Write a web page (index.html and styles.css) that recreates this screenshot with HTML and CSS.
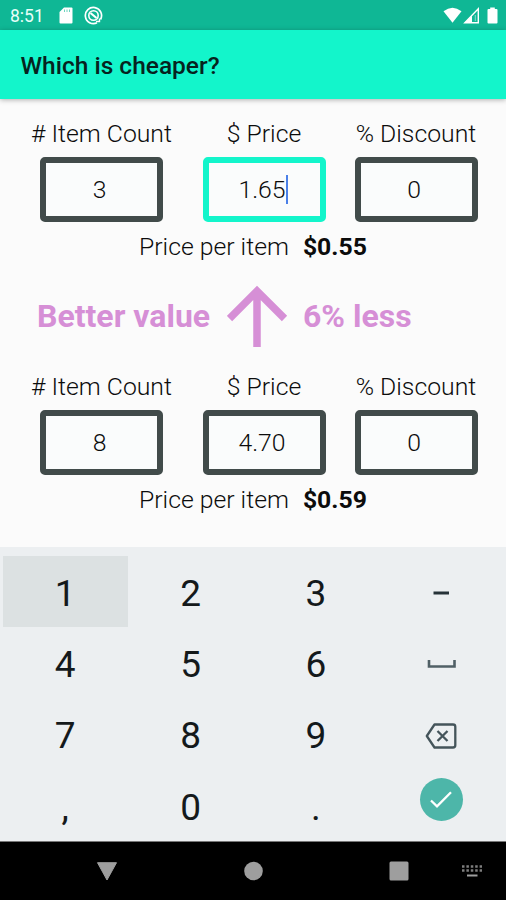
FILE: index.html
```html
<!DOCTYPE html>
<html lang="en">
<head>
  <meta charset="UTF-8">
  <meta name="viewport" content="width=device-width, initial-scale=1.0">
  <title>Which is cheaper?</title>
  <link rel="stylesheet" href="styles.css">
</head>
<body>
  <div class="status-bar">
    <span class="clock">8:51</span>
    <svg class="sd-card" width="14" height="17" viewBox="0 0 14 17">
      <path d="M5 0.5h7.500q1 0 1 1v14q0 1-1 1h-11q-1 0-1-1V5z" fill="#fff"/>
      <path d="M5.500 2.500v2.500M8 2.500v2.500M10.500 2.500v2.500" stroke="#0fb795" stroke-width="1" opacity="0.600"/>
    </svg>
    <svg class="sync" width="19" height="19" viewBox="0 0 19 19" fill="none" stroke="#fff">
      <path d="M13 16.800A8.100 8.100 0 1 1 16.500 13.500" stroke-width="1.700"/>
      <circle cx="9.500" cy="9.500" r="4.700" stroke-width="1.600"/>
      <path d="M6.500 7L12.500 12" stroke-width="2.200"/>
      <path d="M12 15.500h3.500v-3" stroke-width="1.400"/>
    </svg>
    <div class="status-right">
      <svg width="20" height="17" viewBox="0 0 20 17">
        <path d="M0.500 4.300Q9.500-2.700 18.500 4.300L9.500 15.700z" fill="#fff"/>
      </svg>
      <svg width="17" height="17" viewBox="0 0 17 17">
        <path d="M15.300 1.800V15.700H1.800z" fill="none" stroke="#fff" stroke-width="1.400"/>
        <path d="M9 8.500V15.700H1.500z" fill="#fff"/>
        <path d="M12.300 8v6" stroke="#fff" stroke-width="1" opacity="0.500"/>
      </svg>
      <svg class="battery" width="11" height="17" viewBox="0 0 11 17">
        <path d="M3.200 0.500h4.600v1.500h1.700q1 0 1 1v12.500q0 1-1 1h-8q-1 0-1-1V3q0-1 1-1h1.700z" fill="#fff"/>
      </svg>
    </div>
  </div>
  <header class="app-bar">
    <h1>Which is cheaper?</h1>
  </header>

  <main class="content">
    <section class="product">
      <div class="fields">
        <div class="field">
          <label># Item Count</label>
          <div class="box">3</div>
        </div>
        <div class="field">
          <label>$ Price</label>
          <div class="box active">1.65<span class="caret"></span></div>
        </div>
        <div class="field">
          <label>% Discount</label>
          <div class="box">0</div>
        </div>
      </div>
      <p class="per-item">Price per item <strong>$0.55</strong></p>
    </section>

    <div class="result">
      <span class="better">Better value</span>
      <svg width="62" height="62" viewBox="0 0 62 62" fill="none" stroke="#d68fd6" stroke-width="7.500">
        <path d="M30 62V6M2.500 33.500L30 6L57.500 33.500"/>
      </svg>
      <span class="less">6% less</span>
    </div>

    <section class="product">
      <div class="fields">
        <div class="field">
          <label># Item Count</label>
          <div class="box">8</div>
        </div>
        <div class="field">
          <label>$ Price</label>
          <div class="box">4.70</div>
        </div>
        <div class="field">
          <label>% Discount</label>
          <div class="box">0</div>
        </div>
      </div>
      <p class="per-item">Price per item <strong>$0.59</strong></p>
    </section>
  </main>

  <div class="keyboard">
    <div class="key pressed">1</div>
    <div class="key">2</div>
    <div class="key">3</div>
    <div class="key">
      <svg width="16" height="4" viewBox="0 0 16 4"><path d="M0.500 2h15.500" stroke="#263238" stroke-width="3"/></svg>
    </div>
    <div class="key">4</div>
    <div class="key">5</div>
    <div class="key">6</div>
    <div class="key">
      <svg width="29" height="8" viewBox="0 0 29 8"><path d="M2 0v6.500h25.500V0" fill="none" stroke="#506066" stroke-width="2.600"/></svg>
    </div>
    <div class="key">7</div>
    <div class="key">8</div>
    <div class="key">9</div>
    <div class="key">
      <svg width="32" height="26" viewBox="0 0 32 26" fill="none" stroke="#44545a" stroke-width="2.300">
        <path d="M9.500 1.500H28Q30.300 1.500 30.300 3.800V22.200Q30.300 24.500 28 24.500H9.500L1.800 13z" stroke-linejoin="round"/>
        <path d="M12.500 8L22.500 18M22.500 8L12.500 18"/>
      </svg>
    </div>
    <div class="key">,</div>
    <div class="key">0</div>
    <div class="key">.</div>
    <div class="key">
      <div class="done">
        <svg width="22" height="17" viewBox="0 0 22 17"><path d="M1 9.500L7 15.300L21 1.300" fill="none" stroke="#fff" stroke-width="2.300"/></svg>
      </div>
    </div>
  </div>

  <nav class="nav-bar">
    <svg width="22" height="19" viewBox="0 0 22 19"><path d="M1.500 0.700h19L11 18z" fill="#9e9e9e" stroke="#9e9e9e" stroke-linejoin="round"/></svg>
    <svg width="20" height="20" viewBox="0 0 20 20"><circle cx="9.500" cy="10" r="9.300" fill="#9e9e9e"/></svg>
    <svg width="20" height="20" viewBox="0 0 20 20"><rect x="0.500" y="0.500" width="19" height="19" rx="1.500" fill="#9e9e9e"/></svg>
    <svg width="20" height="12" viewBox="0 0 20 12" fill="none" stroke="#9e9e9e">
      <path d="M0 1.500h20M0 5.500h20" stroke-width="2.600" stroke-dasharray="2.500 1.900" opacity="0.800"/>
      <path d="M5 10.500h10.500" stroke-width="2"/>
    </svg>
  </nav>
</body>
</html>
```
FILE: styles.css
```css
* {
  box-sizing: border-box;
}
body {
  margin: 0;
  height: 900px;
  display: flex;
  flex-direction: column;
  overflow: hidden;
  font-family: Roboto, sans-serif;
  background: #fbfbfb;
  color: #0c0c0c;
}
svg {
  display: block;
  flex: none;
}
.status-bar {
  height: 30px;
  padding: 0 8px 0 10px;
  display: flex;
  align-items: center;
  background: #0fb795;
  color: #e8fff9;
}
.clock {
  width: 49px;
  font-size: 17.5px;
  padding-top: 2px;
}
.sync {
  margin-left: 11px;
}
.status-right {
  margin-left: auto;
  display: flex;
}
.battery {
  margin-left: 7px;
}
.app-bar {
  height: 69px;
  padding-left: 20.5px;
  display: flex;
  align-items: center;
  background: #13f5cb;
  box-shadow: 0 1px 5px rgba(0, 0, 0, 0.3);
}
.app-bar h1 {
  margin: 0;
  padding-top: 1px;
  font-size: 24.5px;
  font-weight: 500;
  color: #06231e;
}
.content {
  height: 448px;
  padding-top: 20px;
}
.fields {
  display: grid;
  grid-template-columns: 163px 162px 142px;
  padding-left: 20px;
}
.field {
  display: flex;
  flex-direction: column;
  align-items: center;
}
.field label {
  height: 38px;
  line-height: 30px;
  font-size: 24.75px;
  font-weight: 300;
  white-space: nowrap;
}
.box {
  width: 123px;
  height: 65px;
  padding-right: 4px;
  display: flex;
  align-items: center;
  justify-content: center;
  border: 6px solid #414b4a;
  border-radius: 5px;
  background: #fafcfc;
  font-size: 24.75px;
  font-weight: 300;
}
.box.active {
  border-color: #13f5cb;
}
.caret {
  width: 2px;
  height: 29px;
  margin-right: -2px;
  background: #4a80e8;
}
.per-item {
  margin: 0;
  padding: 10px 0 0 139px;
  line-height: 30px;
  font-size: 24.75px;
  font-weight: 300;
}
.per-item strong {
  margin-left: 8px;
  font-weight: 700;
}
.result {
  height: 110px;
  padding: 0 0 2px 37px;
  display: flex;
  align-items: center;
  color: #d68fd6;
  font-size: 32px;
  font-weight: 700;
}
.better {
  width: 190px;
}
.less {
  margin-left: 14px;
}
.keyboard {
  height: 294px;
  padding: 9px 2px 0 2.5px;
  display: grid;
  grid-template-columns: repeat(4, 1fr);
  grid-template-rows: repeat(4, 71.3px);
  background: #eceff1;
}
.key {
  display: flex;
  align-items: center;
  justify-content: center;
  padding-top: 3px;
  font-size: 37px;
  color: #14191b;
}
.key.pressed {
  background: #dce1e2;
}
.done {
  width: 43px;
  height: 43px;
  margin-bottom: 16px;
  display: flex;
  align-items: center;
  justify-content: center;
  border-radius: 50%;
  background: #4db6a9;
}
.nav-bar {
  height: 59px;
  padding: 0 23px 0 96px;
  display: grid;
  grid-template-columns: 148px 145px 73px auto;
  align-items: center;
  border-top: 1px solid #777;
  background: #000;
}
```
